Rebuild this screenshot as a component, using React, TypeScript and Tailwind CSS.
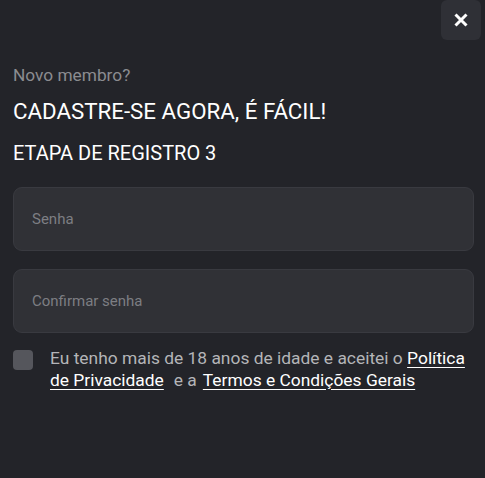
import React from 'react';

const App: React.FC = () => {
  return (
    <div
      className="min-h-[478px] w-full bg-[#232429] relative"
      style={{ fontFamily: 'Roboto, "Liberation Sans", sans-serif' }}
    >
      <button className="absolute top-0 right-[4px] w-10 h-10 rounded-md bg-[#2f3036] flex items-center justify-center">
        <svg width="16" height="16" viewBox="0 0 16 16">
          <path d="M2.5 2.5 L13.5 13.5 M13.5 2.5 L2.5 13.5" stroke="#ffffff" strokeWidth="3" strokeLinecap="butt" />
        </svg>
      </button>

      <div className="pl-[13px] pr-[11px] pt-[64px]">
        <p className="text-[17.3px] leading-[22px] text-[#8b8c90]">Novo membro?</p>
        <h2 className="mt-[11px] text-[22.3px] leading-[28px] text-white">CADASTRE-SE AGORA, É FÁCIL!</h2>
        <h3 className="mt-[15px] text-[20px] leading-[26px] text-white">ETAPA DE REGISTRO 3</h3>

        <div className="mt-[21px] flex flex-col gap-[18px]">
          <div className="h-[64px] rounded-[9px] bg-[#303136] border border-[#393a40] flex items-center px-[18px]">
            <span className="text-[15px] text-[#7d7e83]">Senha</span>
          </div>
          <div className="h-[64px] rounded-[9px] bg-[#303136] border border-[#393a40] flex items-center px-[18px]">
            <span className="text-[15px] text-[#7d7e83]">Confirmar senha</span>
          </div>
        </div>

        <div className="mt-[16px] flex items-start gap-[17px]">
          <div className="mt-[1px] w-5 h-5 shrink-0 rounded-[4px] bg-[#55565c]" />
          <p className="-mt-[2px] text-[17.4px] leading-[22px] text-[#b4b5b8]">
            Eu tenho mais de 18 anos de idade e aceitei o{' '}
            <a className="text-white underline underline-offset-[3px]">Política de Privacidade</a>
            <span className="ml-[10px] mr-[6px]">e a</span>
            <a className="text-white underline underline-offset-[3px]">Termos e Condições Gerais</a>
          </p>
        </div>
      </div>
    </div>
  );
};

export default App;
